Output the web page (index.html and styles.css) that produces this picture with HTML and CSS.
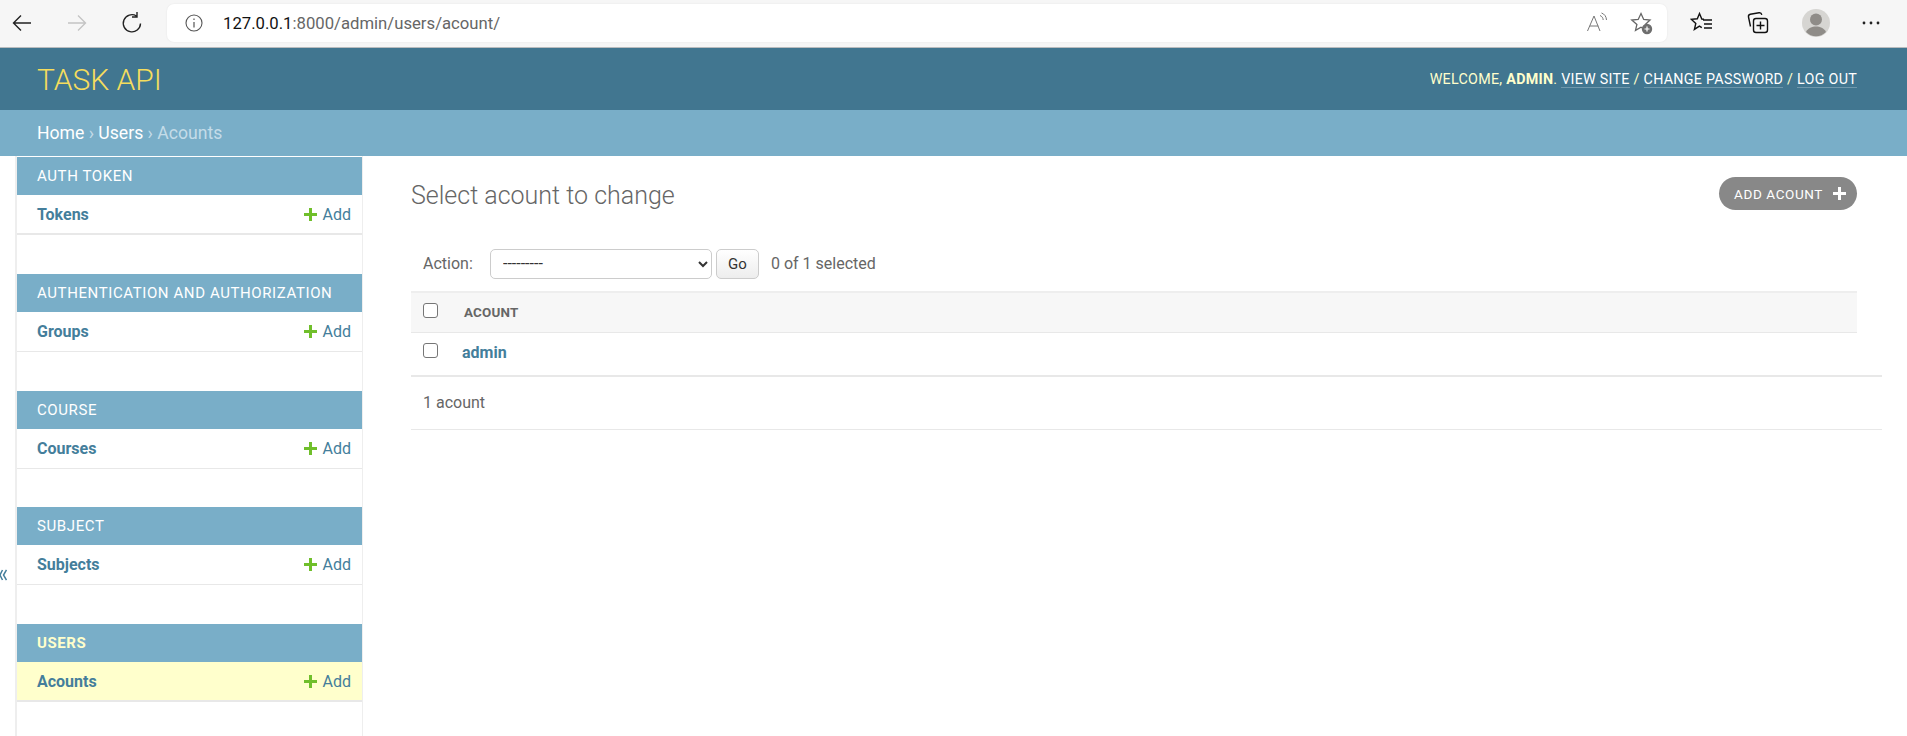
FILE: index.html
```html
<!DOCTYPE html>
<html lang="en">
<head>
<meta charset="utf-8">
<title>Select acount to change</title>
<link rel="stylesheet" href="styles.css">
</head>
<body>
<div class="browser">
  <div class="nav-btns">
    <svg width="24" height="24" viewBox="0 0 24 24"><path d="M21 12H3.500M11 4.500 3.500 12l7.500 7.500" fill="none" stroke="#222" stroke-width="1.400"/></svg>
    <svg width="24" height="24" viewBox="0 0 24 24"><path d="M3 12h17.500M13 4.500l7.500 7.500-7.500 7.500" fill="none" stroke="#c4c4c4" stroke-width="1.400"/></svg>
    <svg width="24" height="24" viewBox="0 0 24 24"><path d="M20.500 12.500A8.600 8.600 0 1 1 16.500 5M17 1v5h-5" fill="none" stroke="#222" stroke-width="1.400"/></svg>
  </div>
  <div class="address">
    <svg class="info" width="18" height="18" viewBox="0 0 18 18"><circle cx="9" cy="9" r="8" fill="none" stroke="#555" stroke-width="1.100"/><path d="M9 8v5.500M9 4.500v1.500" stroke="#555" stroke-width="1.200"/></svg>
    <span class="url"><span class="host">127.0.0.1</span>:8000/admin/users/acount/</span>
    <span class="addr-right">
      <svg width="22" height="22" viewBox="0 0 22 22"><path d="M1.500 19 8 4 14 19M3.800 14h8.500M14 3.500c2 .8 3 2.300 3.200 4.500M15.500 1c3 1 4.800 3.500 5 7" fill="none" stroke="#777" stroke-width="1"/></svg>
      <svg width="24" height="24" viewBox="0 0 24 24"><path d="M11 2.500l2.700 6 6.300.6-4.700 4.300 1.200 6-5.500-3.100-5.500 3.100 1.400-6L1.800 9.100l6.400-.6z" fill="none" stroke="#666" stroke-width="1.300"/><circle cx="17" cy="18" r="5.200" fill="#6e6e6e"/><path d="M14.500 18h5M17 15.500v5" stroke="#fff" stroke-width="1.200"/></svg>
    </span>
  </div>
  <div class="tools">
    <svg width="24" height="24" viewBox="0 0 24 24"><path d="M14 8.300l-2.200-.3L9.500 2.500 7.300 7.800l-5.800.6 4.300 4-1.400 6 5-3.300 2.400 1.500" fill="none" stroke="#111" stroke-width="1.400"/><path d="M13 9h9M14 13h8M14 17h8" stroke="#111" stroke-width="1.300"/></svg>
    <svg width="24" height="24" viewBox="0 0 24 24"><path d="M4.500 15.500 2.500 6c-.3-1.500.4-2.500 1.800-2.800L13 1.800c1.500-.2 2.500.5 2.800 2" fill="none" stroke="#111" stroke-width="1.400"/><rect x="7.500" y="7.500" width="14" height="14" rx="2.500" fill="none" stroke="#111" stroke-width="1.400"/><path d="M14.500 10.500v8M10.500 14.500h8" stroke="#111" stroke-width="1.400"/></svg>
    <svg width="28" height="28" viewBox="0 0 28 28"><circle cx="14" cy="14" r="14" fill="#d6d5d2"/><circle cx="14" cy="10.500" r="6" fill="#8f8c88"/><path d="M4 23c2-4 6-5.500 10-5.500s8 1.500 10 5.500a14 14 0 0 1-20 0z" fill="#8f8c88"/></svg>
    <svg width="18" height="6" viewBox="0 0 18 6"><circle cx="2" cy="3" r="1.400" fill="#222"/><circle cx="9" cy="3" r="1.400" fill="#222"/><circle cx="16" cy="3" r="1.400" fill="#222"/></svg>
  </div>
</div>
<header class="site-header">
  <div class="brand">TASK API</div>
  <div class="user-tools">WELCOME, <strong>ADMIN</strong>. <a href="#">VIEW SITE</a> / <a href="#">CHANGE PASSWORD</a> / <a href="#">LOG OUT</a></div>
</header>
<div class="crumbs"><a href="#">Home</a> › <a href="#">Users</a> › Acounts</div>
<div class="main">
  <button class="toggle" aria-label="Toggle navigation"><svg width="7" height="12" viewBox="0 0 7 12"><path d="M2.500 1 0 6l2.500 5M6.500 1 3.500 6l3 5" fill="none" stroke="#447e9b" stroke-width="1.500"/></svg></button>
  <nav class="sidebar">
    <section class="module">
      <h2 class="mod-title">AUTH TOKEN</h2>
      <div class="mod-row row-thick"><a class="mod-link" href="#">Tokens</a><a class="add" href="#"><svg class="plus" width="13" height="13" viewBox="0 0 13 13"><path d="M5 0h3v5h5v3H8v5H5V8H0V5h5z" fill="#70bf2b"/></svg>Add</a></div>
    </section>
    <section class="module">
      <h2 class="mod-title">AUTHENTICATION AND AUTHORIZATION</h2>
      <div class="mod-row"><a class="mod-link" href="#">Groups</a><a class="add" href="#"><svg class="plus" width="13" height="13" viewBox="0 0 13 13"><path d="M5 0h3v5h5v3H8v5H5V8H0V5h5z" fill="#70bf2b"/></svg>Add</a></div>
    </section>
    <section class="module">
      <h2 class="mod-title">COURSE</h2>
      <div class="mod-row"><a class="mod-link" href="#">Courses</a><a class="add" href="#"><svg class="plus" width="13" height="13" viewBox="0 0 13 13"><path d="M5 0h3v5h5v3H8v5H5V8H0V5h5z" fill="#70bf2b"/></svg>Add</a></div>
    </section>
    <section class="module">
      <h2 class="mod-title">SUBJECT</h2>
      <div class="mod-row"><a class="mod-link" href="#">Subjects</a><a class="add" href="#"><svg class="plus" width="13" height="13" viewBox="0 0 13 13"><path d="M5 0h3v5h5v3H8v5H5V8H0V5h5z" fill="#70bf2b"/></svg>Add</a></div>
    </section>
    <section class="module">
      <h2 class="mod-title active">USERS</h2>
      <div class="mod-row row-thick current"><a class="mod-link" href="#">Acounts</a><a class="add" href="#"><svg class="plus" width="13" height="13" viewBox="0 0 13 13"><path d="M5 0h3v5h5v3H8v5H5V8H0V5h5z" fill="#70bf2b"/></svg>Add</a></div>
    </section>
  </nav>
  <main class="content">
    <div class="title-row">
      <h1 class="page-title">Select acount to change</h1>
      <a class="add-btn" href="#">ADD ACOUNT<svg width="13" height="13" viewBox="0 0 13 13"><path d="M5 0h3v5h5v3H8v5H5V8H0V5h5z" fill="#fff"/></svg></a>
    </div>
    <div class="list">
      <div class="actions">
        <label class="action-label">Action:</label>
        <select class="action-select"><option>---------</option></select>
        <button class="go">Go</button>
        <span class="count">0 of 1 selected</span>
      </div>
      <div class="thead"><input class="cb" type="checkbox"><span class="th">ACOUNT</span></div>
      <div class="tr"><input class="cb" type="checkbox"><a class="row-link" href="#">admin</a></div>
      <div class="paginator">1 acount</div>
    </div>
  </main>
</div>
</body>
</html>
```
FILE: styles.css
```css
* { box-sizing: border-box; }
html, body { margin: 0; padding: 0; }
body {
  width: 1907px;
  height: 736px;
  overflow: hidden;
  background: #fff;
  font-family: Roboto, "Liberation Sans", sans-serif;
  font-size: 16px;
  color: #333;
}
a { text-decoration: none; color: #447e9b; }

.browser {
  height: 48px;
  background: #f6f6f6;
  border-bottom: 1px solid #b9bcbe;
  display: flex;
  align-items: flex-start;
  padding-top: 4px;
}
.nav-btns { width: 167px; display: flex; gap: 31px; padding: 7px 0 0 10px; flex: none; }
.address {
  width: 1500px;
  height: 38px;
  background: #fff;
  border-radius: 7px;
  display: flex;
  align-items: center;
  padding-left: 18px;
  flex: none;
  box-shadow: 0 0 2px rgba(0,0,0,.08);
}
.info { flex: none; }
.url { margin-left: 20px; font-size: 16.700px; color: #666; }
.host { color: #111; }
.addr-right { margin-left: auto; display: flex; gap: 22px; padding-right: 13px; align-items: center; }
.tools { flex: 1; display: flex; align-items: center; padding: 5px 0 0 23px; gap: 32px; }

.site-header {
  height: 62px;
  background: #417690;
  display: flex;
  justify-content: space-between;
  align-items: center;
  padding: 0 50px 0 37px;
}
.brand { font-size: 30px; font-weight: 300; color: #f5dd5d; }
.user-tools { font-size: 14.300px; color: #ffc; letter-spacing: .27px; }
.user-tools strong { font-weight: 700; }
.user-tools a { color: #fff; border-bottom: 1px solid rgba(255,255,255,.25); }

.crumbs {
  height: 46px;
  line-height: 47px;
  background: #79aec8;
  color: #c4dce8;
  padding-left: 37px;
  font-size: 17.600px;
}
.crumbs a { color: #fff; }

.main { display: flex; position: relative; height: 580px; }
.toggle {
  position: absolute;
  left: 0;
  top: 413px;
  width: 7px;
  height: 12px;
  padding: 0;
  border: 0;
  background: none;
  line-height: 0;
}
.sidebar {
  margin-left: 15px;
  width: 348px;
  flex: none;
  border-left: 2px solid #eee;
  border-right: 1px solid #eee;
  padding-top: 1px;
}
.module { margin-bottom: 38.800px; }
.mod-title {
  margin: 0;
  height: 38px;
  line-height: 38px;
  background: #79aec8;
  color: #fff;
  font-size: 15px;
  font-weight: 400;
  letter-spacing: .6px;
  padding-left: 20px;
}
.mod-title.active { color: #ffc; font-weight: 700; }
.mod-row {
  height: 40px;
  display: flex;
  align-items: center;
  justify-content: space-between;
  padding: 0 11px 0 20px;
  border-bottom: 1px solid #e8e8e8;
}
.row-thick { border-bottom-width: 2px; }
.current { background: #ffc; }
.mod-link { font-size: 16px; font-weight: 700; }
.add { font-size: 16px; display: flex; align-items: center; }
.plus { margin-right: 6px; }

.content { flex: 1; padding: 24px 25px 0 48px; min-width: 0; }
.title-row { display: flex; justify-content: space-between; align-items: flex-start; padding-right: 25px; }
.page-title { margin: 0; font-size: 25px; font-weight: 300; color: #666; line-height: 32px; }
.add-btn {
  height: 33px;
  border-radius: 17px;
  background: #888;
  color: #fff;
  font-size: 13.500px;
  letter-spacing: .6px;
  display: flex;
  align-items: center;
  gap: 10px;
  padding: 0 11px 0 15px;
  margin-top: -3px;
}
.list { margin-top: 24px; }
.actions { height: 55px; display: flex; align-items: center; padding-left: 12px; color: #666; }
.action-label { width: 67px; flex: none; }
.action-select {
  width: 222px;
  height: 30px;
  background: #fff;
  border: 1px solid #ccc;
  border-radius: 5px;
  padding-left: 8px;
  font-family: Roboto, sans-serif;
  font-size: 16px;
  color: #333;
}
.go {
  margin-left: 4px;
  width: 43px;
  height: 30px;
  border: 1px solid #ccc;
  border-radius: 5px;
  background: linear-gradient(#fff, #ededed);
  font-family: Roboto, sans-serif;
  font-size: 15px;
  color: #333;
  padding: 0;
}
.count { margin-left: 12px; color: #666; }
.thead {
  height: 42px;
  margin-right: 25px;
  background: #f7f7f7;
  border-top: 2px solid #eee;
  border-bottom: 1px solid #e8e8e8;
  display: flex;
  align-items: center;
  padding-left: 12px;
}
.cb {
  appearance: none;
  margin: 0;
  width: 15px;
  height: 15px;
  border: 1px solid #767676;
  border-radius: 3px;
  background: #fff;
  position: relative;
  top: -2px;
}
.th { margin-left: 26px; font-size: 13.400px; font-weight: 700; color: #666; letter-spacing: .2px; }
.tr {
  height: 44px;
  padding-bottom: 3px;
  border-bottom: 2px solid #e8e8e8;
  display: flex;
  align-items: center;
  padding-left: 12px;
}
.row-link { margin-left: 24px; font-weight: 700; }
.paginator { height: 53px; line-height: 52px; padding-left: 12px; color: #666; border-bottom: 1px solid #e8e8e8; }
```
